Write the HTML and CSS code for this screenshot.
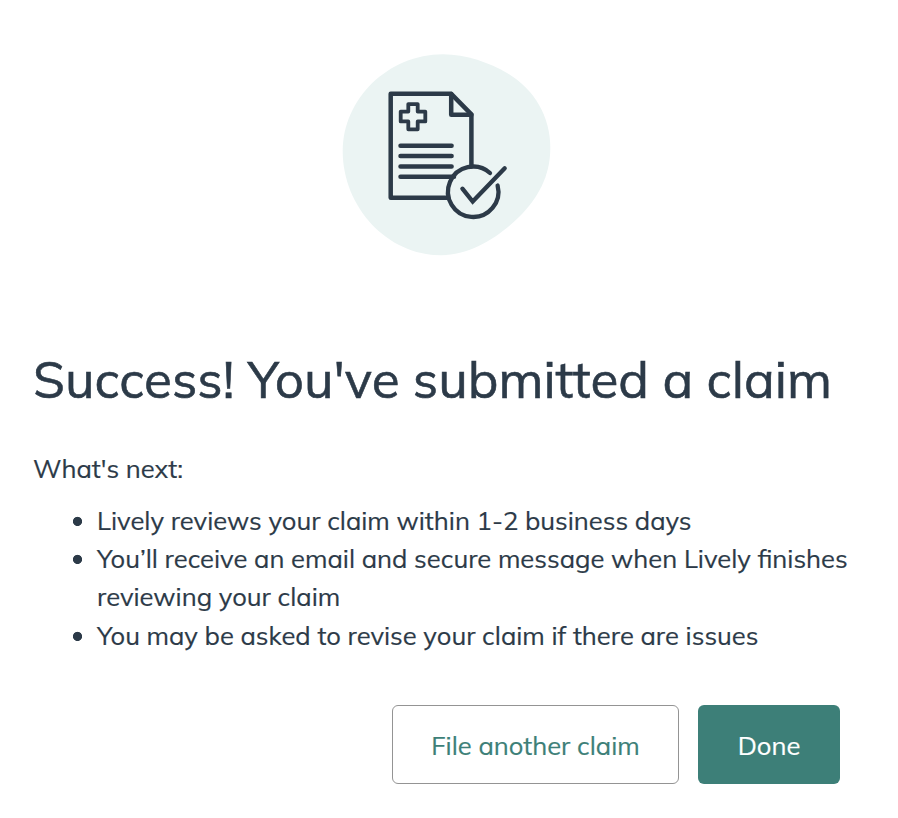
FILE: index.html
```html
<!DOCTYPE html>
<html lang="en">
<head>
<meta charset="utf-8">
<title>Claim submitted</title>
<link rel="stylesheet" href="styles.css">
</head>
<body>
<main class="confirmation">
  <svg class="hero" viewBox="342 53 210 204" width="210" height="204" aria-hidden="true">
    <path class="blob" d="M443 54.300C466 54.300 490 63 507 73C534 89 550.300 116 550.300 148C550.300 176 538 198 519 217C500 236 471 255.300 441 255.300C387 255.300 342.700 207 342.700 151C342.700 99 388 54.300 443 54.300Z"/>
    <g class="ink">
      <path d="M448 197.700H390.700V93.800H451.200L471.400 114.300V166"/>
      <path d="M451.200 94V114.800H471.400"/>
      <path d="M400.500 145.700H451.600M400.500 156.100H451.600M400.500 166.400H451.600M400.500 176.700H454"/>
      <path class="fine" d="M408.300 104.100H417.700V111.600H425.300V121.400H417.700V129.300H408.300V121.400H400.700V111.600H408.300Z"/>
      <path class="check" d="M490 173A25.200 25.200 0 1 0 497.600 185.500"/>
      <path class="check sharp" d="M462.400 188.700L472.700 201.600L504.700 168.300"/>
    </g>
  </svg>
  <h1 class="title">Success! You've submitted a claim</h1>
  <p class="lead">What's next:</p>
  <ul class="steps">
    <li class="step">Lively reviews your claim within 1-2 business days</li>
    <li class="step">You’ll receive an email and secure message when Lively finishes reviewing your claim</li>
    <li class="step">You may be asked to revise your claim if there are issues</li>
  </ul>
  <div class="actions">
    <button class="button button-outline" type="button">File another claim</button>
    <button class="button button-primary" type="button">Done</button>
  </div>
</main>
</body>
</html>
```
FILE: styles.css
```css
* { box-sizing: border-box; }

body {
  margin: 0;
  background: #fff;
  color: #2c3a48;
  font-family: Mulish, Muli, Lato, sans-serif;
  font-size: 25.6px;
  line-height: 38.4px;
  -webkit-text-stroke: 0.2px currentColor;
}

.confirmation {
  display: flex;
  flex-direction: column;
  height: 818px;
  padding: 53px 40px 0 33px;
}

.hero {
  display: block;
  margin-left: 309px;
}

.blob { fill: #ebf4f3; }

.ink {
  fill: none;
  stroke: #2c3a48;
  stroke-width: 4.5;
  stroke-linecap: round;
  stroke-linejoin: round;
}

.fine { stroke-width: 3.8; }
.check { stroke-width: 4.3; }
.sharp { stroke-linejoin: miter; }

.title {
  margin: 90px 0 0;
  font-size: 51.2px;
  font-weight: 400;
  line-height: 64px;
  white-space: nowrap;
  -webkit-text-stroke-width: 0.6px;
}

.lead { margin: 38px 0 0; }

.steps {
  margin: 13.2px 0 0;
  padding: 0;
  list-style: none;
}

.step {
  display: block;
  padding-left: 64px;
  background: radial-gradient(circle at 44.500px 20.4px, #2c3a48 4.2px, transparent 5px);
}

.actions {
  display: flex;
  gap: 19px;
  margin: 50.8px 0 0 359px;
}

.button {
  height: 79px;
  padding: 1px 0 0;
  border: 0;
  border-radius: 6px;
  font: inherit;
}

.button-outline {
  width: 287px;
  border: 1px solid #949494;
  background: #fff;
  color: #3d7f78;
}

.button-primary {
  width: 142px;
  background: #3d7f78;
  color: #fff;
}
```
